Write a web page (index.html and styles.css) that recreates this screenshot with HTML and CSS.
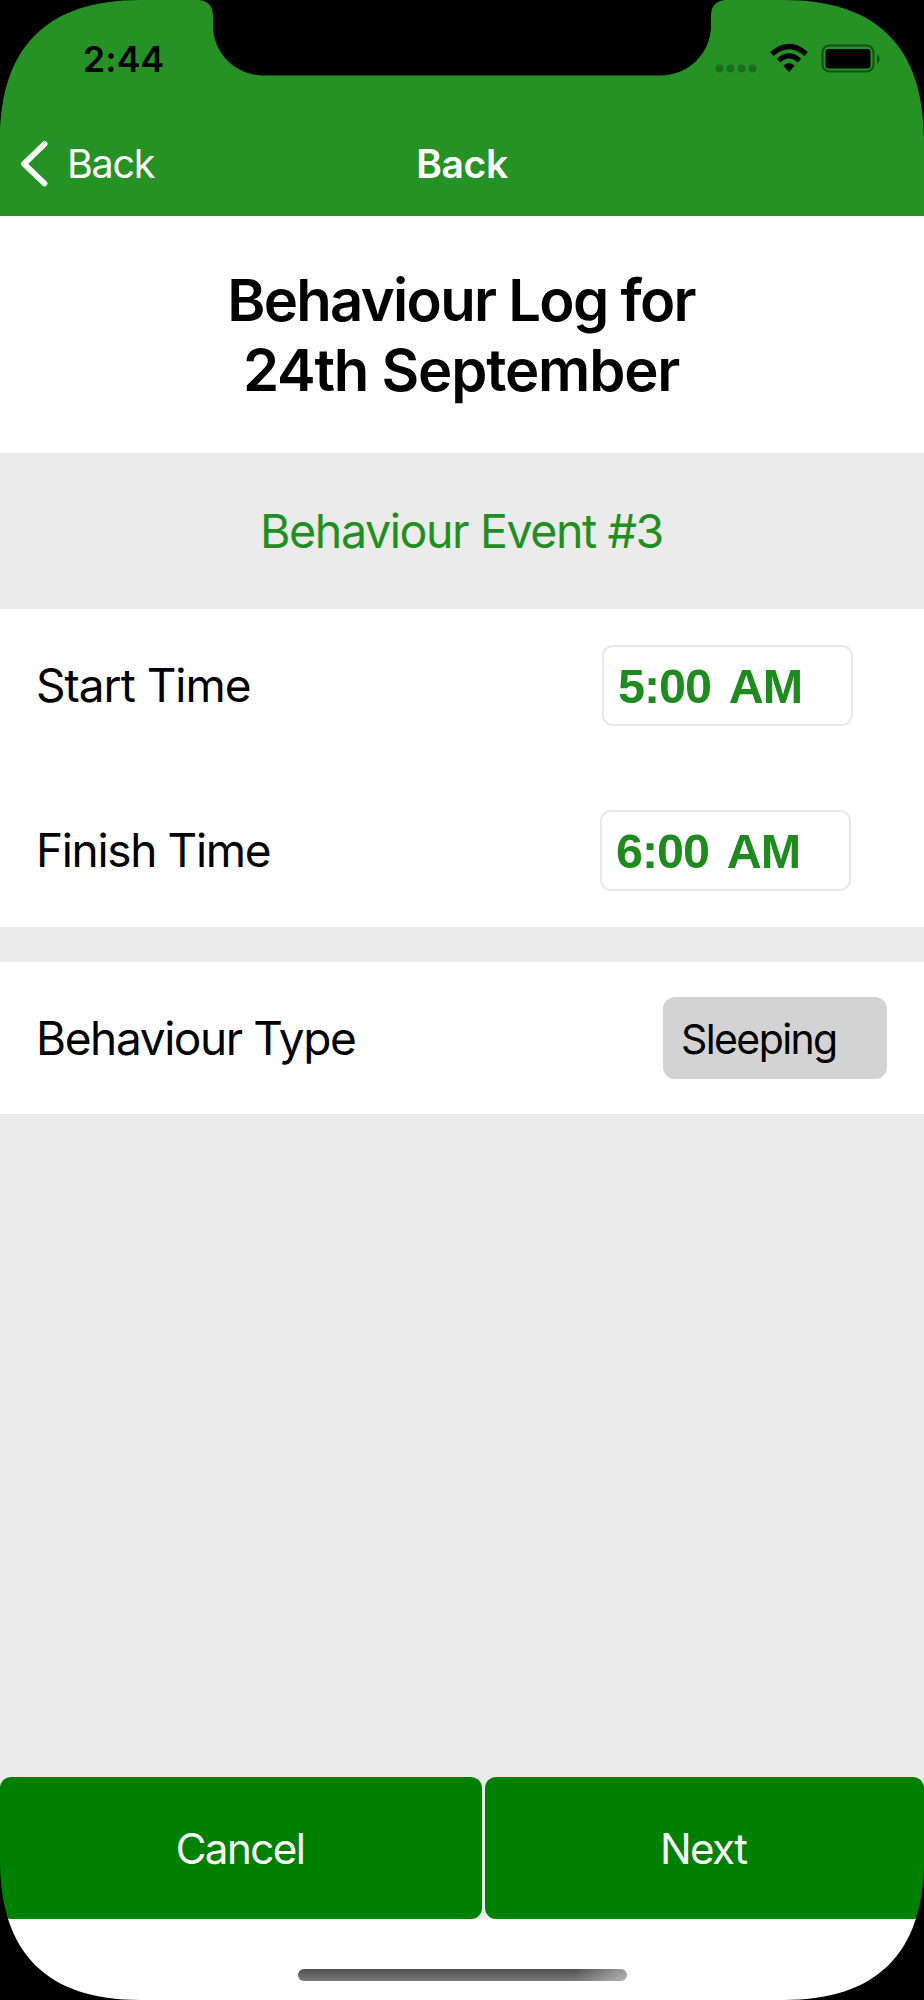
FILE: index.html
```html
<!DOCTYPE html>
<html lang="en">
<head>
<meta charset="utf-8">
<title>Behaviour Log</title>
<link rel="stylesheet" href="styles.css">
</head>
<body>
<div class="phone">
  <header class="header">
    <div class="status">
      <span class="clock">2:44</span>
      <svg class="status-icons" width="168" height="32" viewBox="0 0 168 32">
        <g opacity=".25"><circle cx="4.500" cy="26.500" r="3.900"/><circle cx="15.500" cy="26.500" r="3.900"/><circle cx="26.500" cy="26.500" r="3.900"/><circle cx="37.500" cy="26.500" r="3.900"/></g>
        <g fill="none" stroke="#000" stroke-width="5.200">
          <path d="M56.800 12Q74 -3 91.200 12"/>
          <path d="M63.600 18.600Q74 9.200 84.400 18.600"/>
        </g>
        <path d="M68.200 23.700Q74 18.500 79.800 23.700L74 30Z"/>
        <rect x="107.500" y="3.500" width="51" height="26" rx="7" fill="none" stroke="#000" stroke-opacity=".45" stroke-width="2"/>
        <rect x="110.500" y="7" width="45" height="19.500" rx="3"/>
        <path d="M162 12.500C165.500 14 165.500 20 162 21.500Z" opacity=".45"/>
      </svg>
    </div>
    <nav class="nav">
      <span class="back">
        <svg width="28" height="46" viewBox="0 0 28 46"><path d="M24.500 3L4 22.800L24.500 42.500" fill="none" stroke="#fff" stroke-width="5.800" stroke-linecap="round" stroke-linejoin="round"/></svg>
        <span class="back-label">Back</span>
      </span>
      <span class="nav-title">Back</span>
    </nav>
  </header>
  <h1 class="title"><span class="title-a">Behaviour Log for</span><br><span class="title-b">24th September</span></h1>
  <h2 class="event"><span>Behaviour Event #3</span></h2>
  <section class="times">
    <div class="row"><span class="label start">Start Time</span><span class="time">5:00 AM</span></div>
    <div class="row"><span class="label finish">Finish Time</span><span class="time time-end">6:00 AM</span></div>
  </section>
  <section class="type">
    <span class="label kind">Behaviour Type</span><span class="select">Sleeping</span>
  </section>
  <footer class="actions">
    <div class="button cancel"><span>Cancel</span></div>
    <div class="button next"><span>Next</span></div>
  </footer>
  <div class="home"><div class="home-bar"></div></div>
  <svg class="bezel" width="924" height="2000" viewBox="0 0 924 2000">
    <path d="M0 0H140C47 0 0 47 0 140Z"/>
    <path d="M924 0H784C877 0 924 47 924 140Z"/>
    <path d="M0 2000H140C47 2000 0 1953 0 1860Z"/>
    <path d="M924 2000H784C877 2000 924 1953 924 1860Z"/>
    <path d="M199 0C208 1 213 6 213 16V25C213 54 236 75.500 264 75.500H660C688 75.500 711 54 711 25V16C711 6 716 1 725 0Z"/>
  </svg>
</div>
</body>
</html>
```
FILE: styles.css
```css
* { box-sizing: border-box; }
body { margin: 0; background: #000; }
.phone {
  position: relative; width: 924px; height: 2000px; overflow: hidden;
  display: flex; flex-direction: column; background: #ebebeb;
  font-family: Inter, "Liberation Sans", sans-serif; color: #000;
  white-space: nowrap;
}
.header { height: 215.500px; background: #269226; }
.status { height: 115px; padding: 42px 41px 0 83px; display: flex; justify-content: space-between; align-items: flex-start; }
.clock { font-size: 35.500px; font-weight: 600; line-height: 36px; letter-spacing: .1px; }
.nav { height: 100px; padding: 0 20px; display: grid; grid-template-columns: 1fr auto 1fr; align-items: center; color: #fff; }
.back { display: flex; align-items: center; gap: 19px; padding-bottom: 3px; }
.back-label { font-size: 39.500px; line-height: 46px; letter-spacing: -1.300px; }
.nav-title { font-size: 39px; font-weight: 600; line-height: 46px; letter-spacing: -.4px; padding-bottom: 3px; }
.title { margin: 0; height: 237px; padding: 49px 2px 0 0; background: #fff; text-align: center; font-size: 58px; font-weight: 600; line-height: 70px; }
.title-a { letter-spacing: -1.700px; }
.title-b { letter-spacing: -1.180px; }
.event { margin: 0; height: 156px; padding-right: 1px; display: flex; align-items: center; justify-content: center; color: #1f8f1f; font-size: 46.500px; font-weight: 400; letter-spacing: -1.400px; }
.times { height: 318px; background: #fff; padding: 36px 71px 0 36px; display: flex; flex-direction: column; gap: 84px; }
.row, .type { display: flex; align-items: center; justify-content: space-between; }
.label { font-size: 46px; line-height: 56px; }
.start { letter-spacing: -1px; }
.finish { letter-spacing: -1.350px; }
.kind { letter-spacing: -1.400px; }
.time { width: 251px; height: 81px; border: 2px solid #e8e8e8; border-radius: 11px; padding-left: 14px; line-height: 79px; font-family: "Liberation Sans", sans-serif; font-weight: 700; font-size: 48.500px; letter-spacing: -1px; word-spacing: 7px; color: #1f8b1f; }
.time-end { margin-right: 2px; }
.type { height: 151.500px; margin-top: 35.500px; padding: 0 37px 0 36px; background: #fff; }
.select { width: 224px; height: 82px; border-radius: 12px; background: #d3d3d3; padding-left: 18px; line-height: 84px; font-size: 41px; letter-spacing: -1.600px; }
.actions { margin-top: auto; height: 142px; display: flex; gap: 2.500px; }
.button { background: #008000; color: #fff; border-radius: 11px; padding-right: 2px; display: flex; align-items: center; justify-content: center; font-size: 42px; letter-spacing: -1.500px; }
.cancel { width: 482px; }
.next { flex: 1; }
.home { height: 81px; background: #fff; padding-top: 50px; }
.home-bar { width: 329px; height: 12px; margin-left: 298px; border-radius: 6px; background: linear-gradient(90deg, transparent 84%, #ffffff70), linear-gradient(#505050, #7a7a7a); }
.bezel { position: absolute; inset: 0; }
```
